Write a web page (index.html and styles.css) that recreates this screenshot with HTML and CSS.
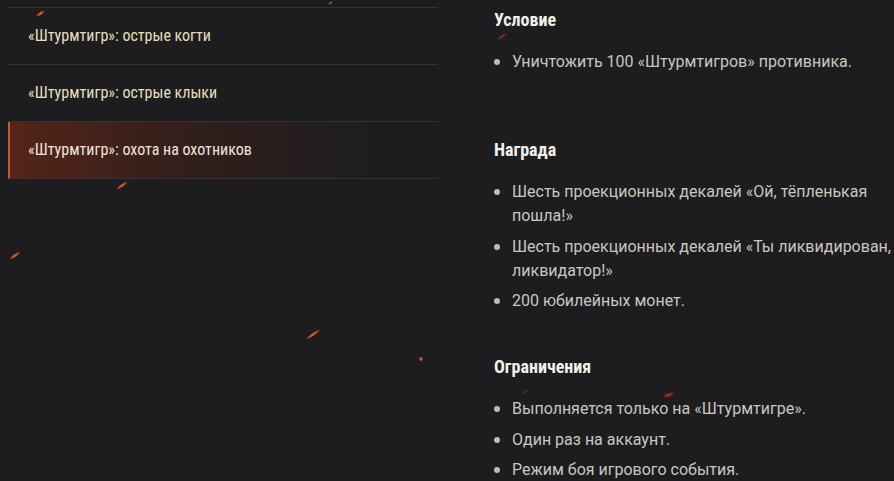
FILE: index.html
```html
<!DOCTYPE html>
<html lang="ru">
<head>
  <meta charset="UTF-8">
  <title>Штурмтигр</title>
  <link rel="stylesheet" href="styles.css">
</head>
<body>
  <div class="page">
    <ul class="missions">
      <li class="mission">«Штурмтигр»: острые когти</li>
      <li class="mission">«Штурмтигр»: острые клыки</li>
      <li class="mission active">«Штурмтигр»: охота на охотников</li>
    </ul>

    <div class="details">
      <div class="block first">
        <h3>Условие</h3>
        <ul class="points">
          <li>Уничтожить 100 «Штурмтигров» противника.</li>
        </ul>
      </div>
      <div class="block">
        <h3>Награда</h3>
        <ul class="points">
          <li>Шесть проекционных декалей «Ой, тёпленькая пошла!»</li>
          <li>Шесть проекционных декалей «Ты ликвидирован, ликвидатор!»</li>
          <li>200 юбилейных монет.</li>
        </ul>
      </div>
      <div class="block">
        <h3>Ограничения</h3>
        <ul class="points">
          <li>Выполняется только на «Штурмтигре».</li>
          <li>Один раз на аккаунт.</li>
          <li>Режим боя игрового события.</li>
        </ul>
      </div>
    </div>
  </div>

  <div class="sparks">
    <span class="spark s1"></span>
    <span class="spark s2"></span>
    <span class="spark s3"></span>
    <span class="spark s4"></span>
    <span class="spark s5"></span>
    <span class="spark s6"></span>
    <span class="spark s7"></span>
    <span class="spark s8"></span>
    <span class="spark s9"></span>
  </div>
</body>
</html>
```
FILE: styles.css
```css
html, body { margin: 0; height: 100%; overflow: hidden; }
body { background: #1d1d1f; font-family: Roboto, "Noto Sans", sans-serif; color: #c9c7bf; }

.page { display: flex; padding-left: 8px; }

.missions { flex: 0 0 430px; list-style: none; margin: 7px 0 0; padding: 0; border-top: 1px solid #333335; }
.mission { height: 56px; line-height: 56px; padding-left: 20px; border-bottom: 1px solid #333335;
  font-family: "Roboto Condensed", Roboto, sans-serif; font-size: 16px; color: #e8dfbd; }
.mission.active { padding-left: 18px; border-left: 2px solid #c95a2c; color: #efe6d8;
  background: linear-gradient(90deg, rgba(95, 38, 24, 0.85) 0%, rgba(68, 32, 24, 0.55) 40%, rgba(29, 29, 31, 0) 85%); }

.details { flex: 1; min-width: 0; margin-left: 56px; padding-top: 8px; }
.block { margin-bottom: 42px; }
.block.first { margin-bottom: 64px; }
.block:last-child { margin-bottom: 0; }
.block h3 { margin: 0 0 18px; font-size: 18px; line-height: 24px; font-weight: 700; color: #f2f0ea;
  font-family: "Roboto Condensed", Roboto, sans-serif; }

.points { list-style: none; margin: 0; padding: 0; }
.points li { position: relative; padding-left: 18px; font-size: 16px; line-height: 24px; margin-bottom: 6.5px; }
.points li:last-child { margin-bottom: 0; }
.points li::before { content: ""; position: absolute; left: 0; top: 9px; width: 6px; height: 6px; border-radius: 50%; background: #bdbcb6; }

.sparks { position: absolute; inset: 0; pointer-events: none; }
.spark { position: absolute; width: 12px; height: 3px; border-radius: 50%; transform: rotate(-35deg); opacity: 0.85;
  background: radial-gradient(ellipse, #f08a44 0%, #b8441c 55%, rgba(160, 40, 20, 0) 100%); }
.s1 { left: 36px; top: 12px; width: 9px; }
.s2 { left: 116px; top: 184px; }
.s3 { left: 9px; top: 254px; }
.s4 { left: 305px; top: 333px; width: 16px; }
.s5 { left: 419px; top: 357px; width: 4px; height: 4px; }
.s6 { left: 497px; top: 35px; width: 10px; background: radial-gradient(ellipse, #c0301c 0%, rgba(140, 30, 20, 0) 100%); }
.s7 { left: 663px; top: 393px; width: 11px; height: 4px; transform: rotate(-20deg); background: radial-gradient(ellipse, #e0301c 0%, rgba(180, 30, 20, 0) 100%); }
.s8 { left: 520px; top: 391px; width: 9px; height: 2px; background: radial-gradient(ellipse, #a02818 0%, rgba(120, 30, 20, 0) 100%); }
.s9 { left: 328px; top: 2px; width: 5px; height: 2px; }
```
